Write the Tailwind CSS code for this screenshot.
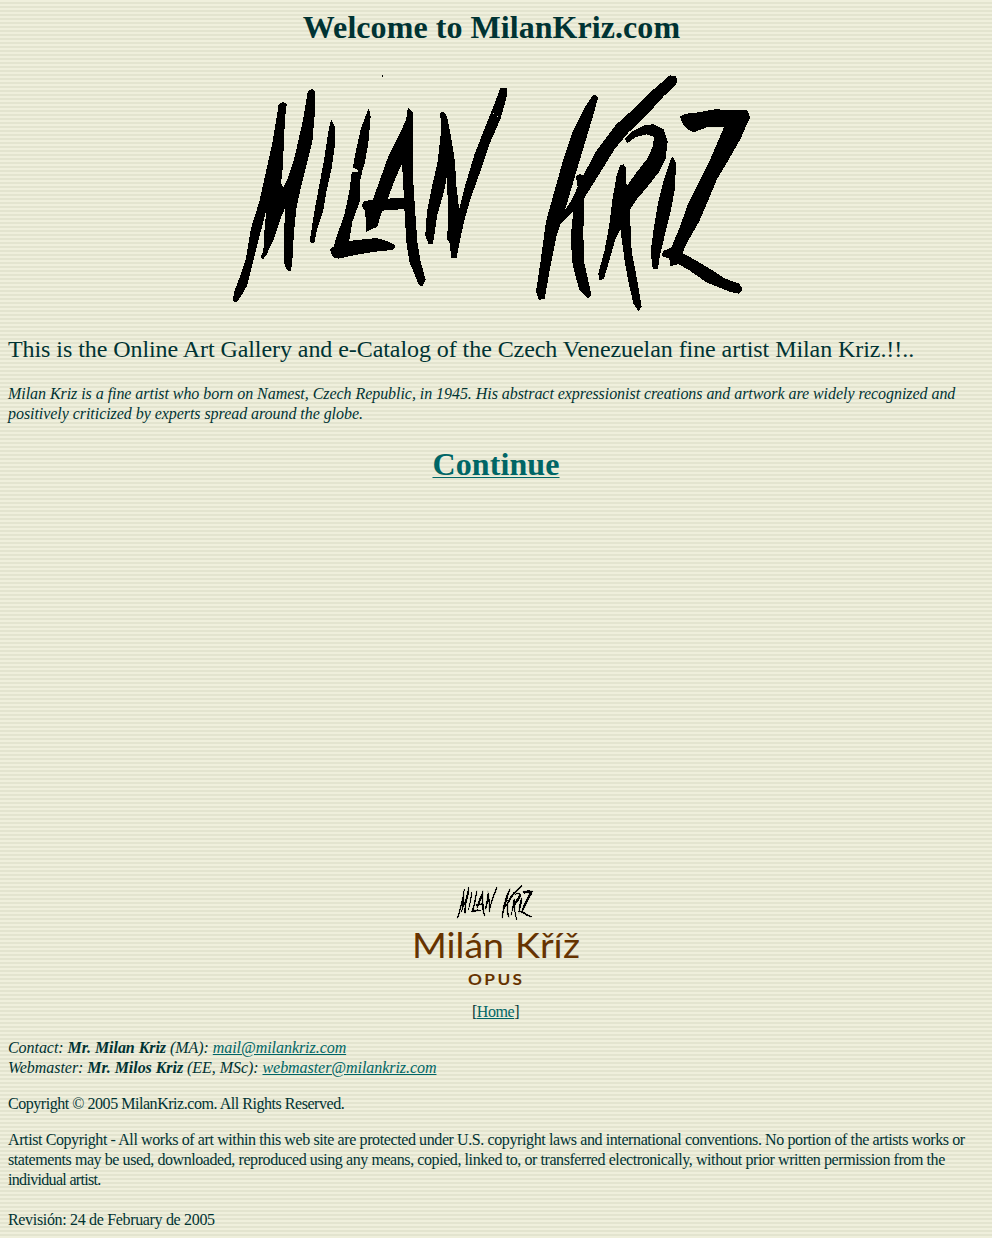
<!DOCTYPE html>
<html lang="en"><head><meta charset="utf-8"><title>Welcome to MilanKriz.com</title>
<script src="https://cdn.jsdelivr.net/npm/@tailwindcss/browser@4"></script></head>
<body class="min-h-[1238px] overflow-hidden px-2 font-['Liberation_Serif',serif] text-[16px] leading-5 text-[#003333] bg-[repeating-linear-gradient(to_bottom,#efefdc_0px,#efefdc_2px,#e3e4cf_2px,#e3e4cf_4px)]">
<h1 class="pt-[9px] pr-[9px] text-center text-[32px] leading-[37px] font-bold tracking-[0.06px]">Welcome to MilanKriz.com</h1>
<div class="mt-[20px] flex justify-center pr-[10px]">
<svg class="h-[246px] w-[530px]" viewBox="226 66 530 246" role="img" aria-label="Milan Kriz signature">
<defs><g id="sig" stroke-linejoin="round">
<path transform="translate(225 65) scale(.33333)" d="M163 118L175 113L183 118L178 160L175 230L171 310L166 355L175 370L190 340L210 280L235 170L250 80L260 74L269 80L267 150L260 230L240 310L225 370L212 430L205 500L200 590L196 616L187 614L178 590L179 500L184 415L165 460L145 520L122 570L113 581L109 575L117 560L120 500L128 412L105 500L85 580L65 660L45 695L33 711L25 705L30 680L45 640L65 580L80 490L105 410L125 320L145 230L158 150ZM319 168L327 185L328 240L318 310L302 380L292 440L275 490L266 532L258 531L258 518L270 440L285 360L300 280L312 200Z"/>
<path fill-rule="evenodd" transform="translate(325 65) scale(.33333)" d="M131 135L135 155L128 235L117 295L111 313L104 345L102 410L80 470L70 530L155 521L190 532L210 543L203 553L150 558L100 566L40 579L25 575L17 553L28 546L35 520L60 450L75 380L82 324L100 324L102 315L86 306L92 270L110 190ZM250 132L262 142L263 240L263 350L268 430L275 530L285 590L300 645L290 662L282 655L255 590L246 530L240 430L170 435L155 485L135 492L125 498L123 440L114 425L115 412L145 405L165 350L190 280L225 210L245 165ZM232 288L205 350L186 403L238 400L237 350ZM348 145L355 142L364 155L375 210L388 290L392 360L402 445L420 370L450 270L485 180L515 105L527 72L545 70L543 95L525 160L490 240L460 330L435 400L415 470L400 540L393 578L381 578L375 530L367 520L372 480L370 400L366 322L355 380L335 450L322 535L312 536L303 510L308 440L322 370L340 290L350 200ZM501 142h9v7h-9ZM514 151l8 3v8l-8-5Z"/>
<path transform="translate(530 65) scale(.33333)" d="M192 90L202 98L188 150L155 260L128 350L112 405L98 450L78 510L60 600L42 700L28 702L20 680L35 580L50 470L75 380L100 290L130 200L165 130ZM80 485L95 455L130 400L145 365L140 335L150 328L160 335L200 260L260 180L310 135L360 85L395 55L420 33L435 35L441 48L435 60L400 92L345 153L295 200L253 250L213 315L160 400L160 440L158 500L160 590L182 688L175 698L150 675L130 600L124 520L132 435L105 460ZM272 302L280 300L286 310L288 370L320 325L355 280L370 245L375 215L350 206L315 215L292 232L287 220L310 200L345 182L370 180L400 195L411 230L405 280L385 320L350 365L320 400L297 435L300 490L303 560L315 620L333 725L325 735L312 715L295 640L285 580L272 485L255 520L235 590L220 640L210 643L207 625L225 560L240 480L250 400L262 330Z"/>
<path transform="translate(630 65) scale(.33333)" d="M128 277L136 295L133 370L120 440L105 500L88 570L82 610L70 610L64 560L72 500L85 420L105 340L122 290ZM152 155L170 148L200 145L255 135L350 138L359 158L345 185L330 220L290 290L260 340L235 400L205 470L165 540L155 565L200 590L245 617L285 643L325 657L336 672L325 684L300 678L230 650L180 615L145 595L122 602L120 580L98 572L100 560L125 550L150 490L175 420L205 360L240 290L285 185L230 185L190 200L175 192L160 175Z"/>
</g></defs>
<use href="#sig" shape-rendering="crispEdges" stroke="#000" stroke-width="4"/><rect x="382" y="75" width="1" height="2"/></svg></div>
<p class="mt-[24px] text-[24px] leading-[27px] tracking-[-0.068px] whitespace-nowrap">This is the Online Art Gallery and e-Catalog of the Czech Venezuelan fine artist Milan Kriz.!!..</p>
<p class="mt-[21px] tracking-[-0.052px] whitespace-nowrap italic">Milan Kriz is a fine artist who born on Namest, Czech Republic, in 1945. His abstract expressionist creations and artwork are widely recognized and<br>positively criticized by experts spread around the globe.</p>
<h2 class="mt-[22px] text-center text-[32px] leading-[37px] font-bold tracking-[0.1px] text-[#006666]"><a class="underline decoration-1 underline-offset-[2px]" href="#">Continue</a></h2>
<div class="mt-[402px] flex flex-col items-center">
<svg class="mr-[3px] h-[35px] w-[78px]" viewBox="232 73 520 238" aria-hidden="true"><use href="#sig" shape-rendering="crispEdges" stroke="#000" stroke-width="3"/></svg>
<svg class="mt-[8px] h-[62px] w-[180px] overflow-visible" viewBox="0 0 180 62" fill="#663300" font-family="Lato, sans-serif"><text x="6" y="30" font-size="34" textLength="92" lengthAdjust="spacingAndGlyphs">Milán</text><text x="109" y="30" font-size="34" textLength="65" lengthAdjust="spacingAndGlyphs">Kříž</text><text transform="translate(62 57) scale(1.15 1)" font-size="15" font-weight="700" textLength="47">OPUS</text></svg>
</div>
<p class="mt-[12px] pr-px text-center tracking-[-0.45px]">[<a class="text-[#006666] underline" href="#">Home</a>]</p>
<p class="mt-4 tracking-[-0.05px] whitespace-nowrap italic">Contact: <b>Mr. Milan Kriz</b> (MA): <a class="text-[#006666] underline" href="#">mail@milankriz.com</a><br>Webmaster: <b>Mr. Milos Kriz</b> (EE, MSc): <a class="text-[#006666] underline" href="#">webmaster@milankriz.com</a></p>
<p class="mt-4 tracking-[-0.46px]">Copyright © 2005 MilanKriz.com. All Rights Reserved.</p>
<p class="mt-4 whitespace-nowrap"><span class="tracking-[-0.4px]">Artist Copyright - All works of art within this web site are protected under U.S. copyright laws and international conventions. No portion of the artists works or</span><br><span class="tracking-[-0.422px]">statements may be used, downloaded, reproduced using any means, copied, linked to, or transferred electronically, without prior written permission from the</span><br><span class="tracking-[-0.68px]">individual artist.</span></p>
<p class="mt-5 tracking-[-0.33px]">Revisión: 24 de February de 2005</p>
</body></html>
